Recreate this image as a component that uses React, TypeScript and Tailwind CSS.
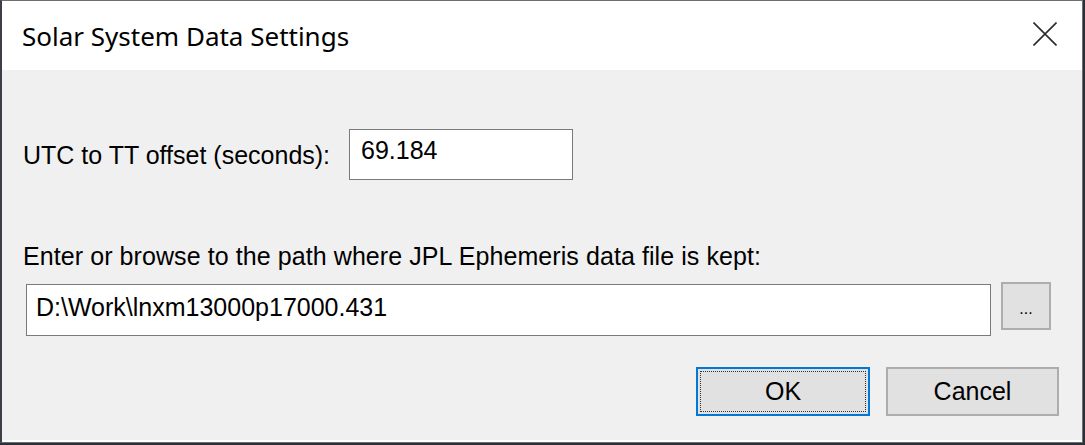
export default function App() {
  return (
    <div className="h-[445px] w-[1085px] bg-[#2b3038]">
      <div className="flex h-[443px] w-[1083px] flex-col border border-[#6b6f73] border-l-2 border-l-[#3c4046] bg-white">
        {/* title bar */}
        <div className="flex h-[69px] shrink-0 items-center justify-between bg-white pl-[20px] pr-[25px]">
          <span className="font-['Noto_Sans',sans-serif] text-[26px] leading-none text-black">
            Solar System Data Settings
          </span>
          <svg width="24" height="24" viewBox="0 0 24 24" className="mt-[-3px]">
            <path d="M0.5 0.5 L23.5 23.5 M23.5 0.5 L0.5 23.5" stroke="#2b2b2b" strokeWidth="1.6" fill="none" />
          </svg>
        </div>

        {/* body */}
        <div className="flex flex-1 flex-col border-b-2 border-white bg-[#f0f0f0] pl-[21px] pr-[23px] font-['Liberation_Sans',sans-serif] text-[25px] text-black">
          <div className="mt-[59px] flex items-center gap-[19px]">
            <span className="leading-[26px]">UTC to TT offset (seconds):</span>
            <div className="flex h-[51px] w-[224px] items-start border border-[#7a7a7a] bg-white px-[11px] pt-[7px] leading-[26px]">
              69.184
            </div>
          </div>

          <div className="mt-[63px] leading-[26px] tracking-[0.08px]">
            Enter or browse to the path where JPL Ephemeris data file is kept:
          </div>

          <div className="mt-[15px] flex items-start gap-[10px]">
            <div className="ml-[3px] flex h-[52px] w-[965px] items-start border border-[#7a7a7a] bg-white px-[9px] pt-[9px] leading-[26px]">
              D:\Work\lnxm13000p17000.431
            </div>
            <div className="mt-[-2px] flex h-[48px] w-[50px] items-center justify-center border-2 border-[#adadad] bg-[#e1e1e1] pt-[6px] text-[16px]">
              ...
            </div>
          </div>

          <div className="mt-[31px] flex justify-end gap-[16px]">
            <div className="h-[49px] w-[174px] border-2 border-[#0078d7] bg-[#e1e1e1] p-[2px]">
              <div className="flex h-full w-full items-center justify-center border border-dotted border-[#333] leading-none">
                OK
              </div>
            </div>
            <div className="flex h-[49px] w-[173px] items-center justify-center border-2 border-[#adadad] bg-[#e1e1e1] leading-none">
              Cancel
            </div>
          </div>
        </div>
      </div>
    </div>
  );
}
